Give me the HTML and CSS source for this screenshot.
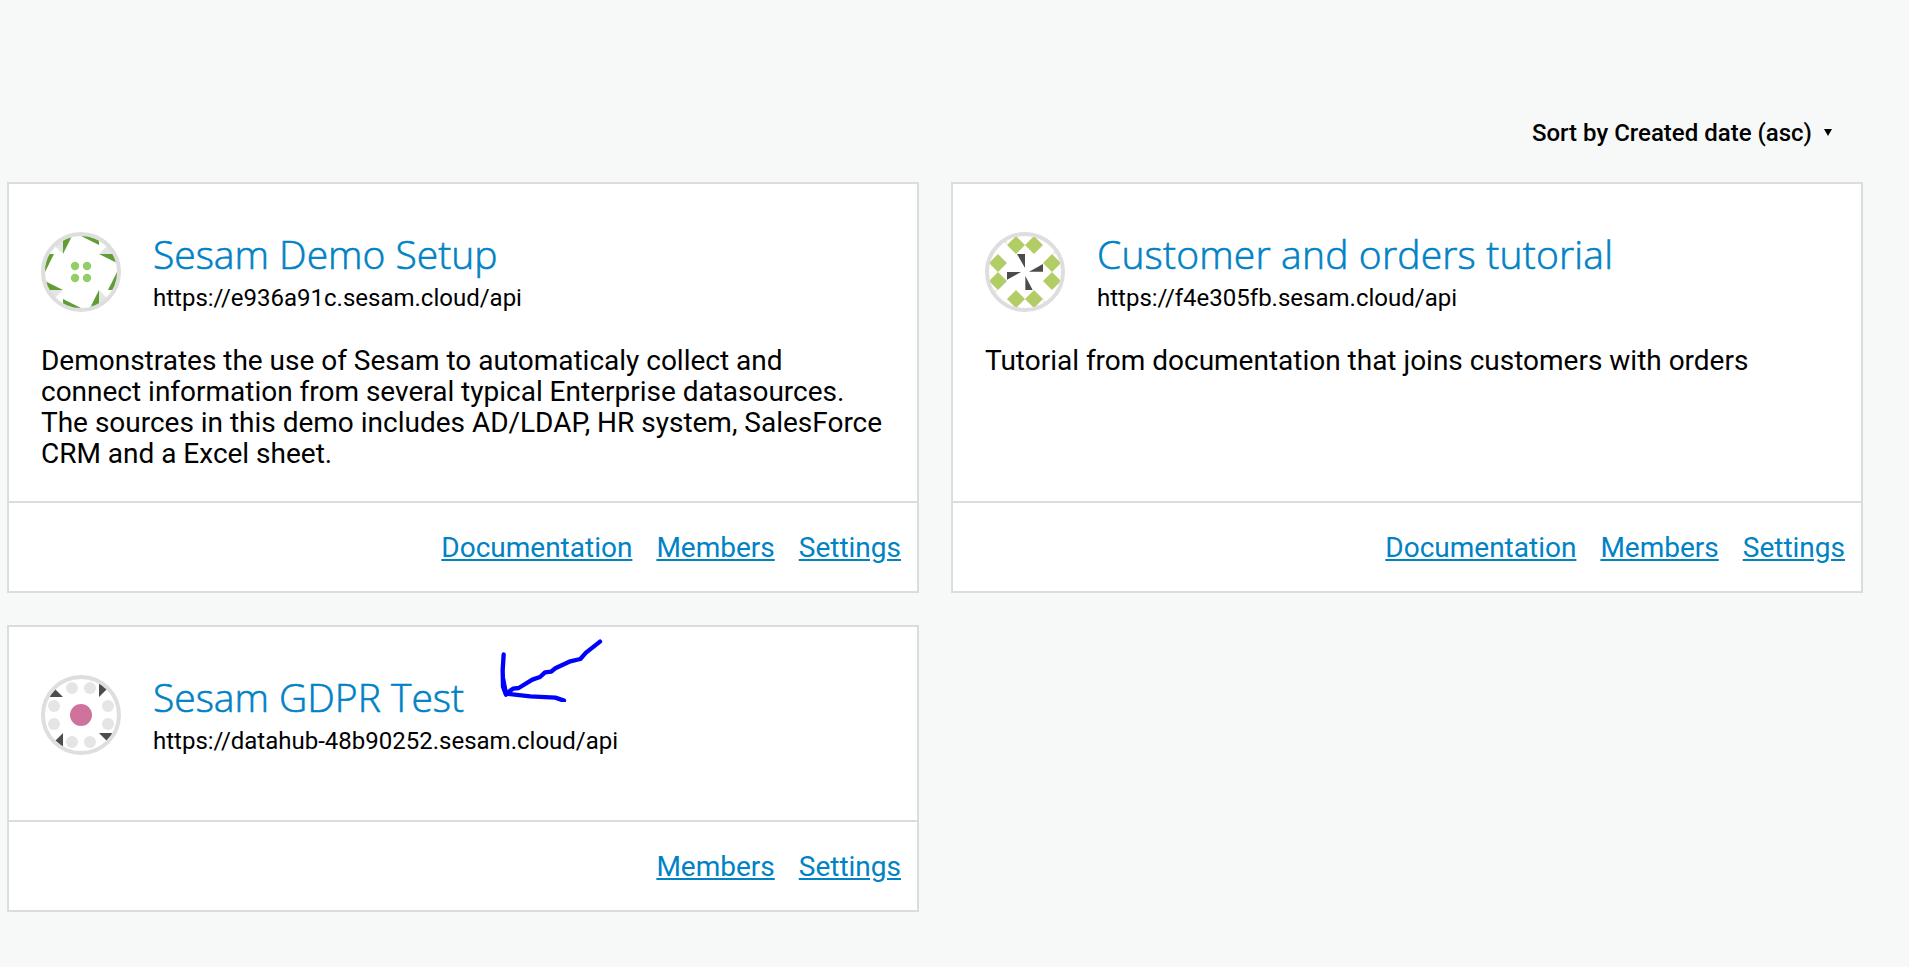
FILE: index.html
```html
<!DOCTYPE html>
<html lang="en">
<head>
<meta charset="utf-8">
<title>Sesam subscriptions</title>
<link rel="stylesheet" href="styles.css">
</head>
<body>
<main class="page">
  <div class="toolbar"><span class="sort-label">Sort by Created date (asc)</span><svg class="caret" viewBox="0 0 8 7"><path d="M0 0h8L4 7z"/></svg></div>
  <div class="cards">
    <article class="card">
      <div class="body">
        <header class="head">
          <svg class="avatar" viewBox="33 36 240 240">
            <clipPath id="c1"><circle cx="153" cy="156" r="110"/></clipPath>
            <circle cx="153" cy="156" r="114" fill="#fff"/>
            <g clip-path="url(#c1)">
              <path fill="#e5e5e5" d="M72 75L99 48V102zM207 102H261L234 75zM207 210V264L234 237zM45 210H99L72 237z"/>
              <path fill="#609e34" d="M99 48H126L99 102zM153 48H207V75zM207 102H261V129zM261 156V210H234zM207 210V264H180zM99 237L153 264H99zM45 183L99 210H45zM45 102H72L45 156z"/>
              <g fill="#92cf68"><circle cx="135" cy="138" r="12.5"/><circle cx="171" cy="138" r="12.5"/><circle cx="135" cy="174" r="12.5"/><circle cx="171" cy="174" r="12.5"/></g>
            </g>
            <circle class="ring" cx="153" cy="156" r="114"/>
          </svg>
          <div class="heading"><h2 class="title title-demo">Sesam Demo Setup</h2><p class="url">https://e936a91c.sesam.cloud/api</p></div>
        </header>
        <p class="desc">Demonstrates the use of Sesam to automaticaly collect and connect information from several typical Enterprise datasources. The sources in this demo includes AD/LDAP, HR system, SalesForce CRM and a Excel sheet.</p>
      </div>
      <footer class="links"><a href="#">Documentation</a><a href="#">Members</a><a href="#">Settings</a></footer>
    </article>
    <article class="card">
      <div class="body">
        <header class="head">
          <svg class="avatar" viewBox="30 36 240 240">
            <clipPath id="c2"><circle cx="150" cy="156" r="110"/></clipPath>
            <g clip-path="url(#c2)">
              <path fill="#ececec" d="M69 48H96V75zM258 75V102H231zM231 264H204V237zM42 237V210H69z"/>
              <path fill="#b2cd66" d="M123 48l27 27-27 27-27-27zM177 48l27 27-27 27-27-27zM231 102l27 27-27 27-27-27zM231 156l27 27-27 27-27-27zM177 210l27 27-27 27-27-27zM123 210l27 27-27 27-27-27zM69 156l27 27-27 27-27-27zM69 102l27 27-27 27-27-27z"/>
              <path fill="#4c4c4c" d="M126 102H150V144zM162 155L204 132V155zM151 168L173 210H151zM96 156H138L96 179z"/>
            </g>
            <circle class="ring" cx="150" cy="156" r="114"/>
          </svg>
          <div class="heading"><h2 class="title title-tutorial">Customer and orders tutorial</h2><p class="url">https://f4e305fb.sesam.cloud/api</p></div>
        </header>
        <p class="desc">Tutorial from documentation that joins customers with orders</p>
      </div>
      <footer class="links"><a href="#">Documentation</a><a href="#">Members</a><a href="#">Settings</a></footer>
    </article>
    <article class="card">
      <div class="body">
        <header class="head">
          <svg class="avatar" viewBox="33 30 240 240">
            <clipPath id="c3"><circle cx="153" cy="150" r="110"/></clipPath>
            <g clip-path="url(#c3)">
              <g fill="#e5e5e5"><circle cx="126" cy="69" r="18"/><circle cx="180" cy="69" r="18"/><circle cx="234" cy="123" r="18"/><circle cx="234" cy="177" r="18"/><circle cx="180" cy="231" r="18"/><circle cx="126" cy="231" r="18"/><circle cx="72" cy="177" r="18"/><circle cx="72" cy="123" r="18"/></g>
              <path fill="#4c4c4c" d="M45 96H99L72 69zM207 42V96L234 69zM207 204H261L234 231zM99 204V258L72 231z"/>
              <circle cx="153" cy="150" r="33" fill="#d0739c"/>
            </g>
            <circle class="ring" cx="153" cy="150" r="114"/>
          </svg>
          <div class="heading"><h2 class="title title-gdpr">Sesam GDPR Test</h2><p class="url">https://datahub-48b90252.sesam.cloud/api</p></div>
        </header>
        <p class="desc"></p>
      </div>
      <footer class="links"><a href="#">Members</a><a href="#">Settings</a></footer>
      <svg class="arrow" viewBox="1100 45 330 200">
        <path stroke-width="13" d="M1409 65L1367 98L1350 117L1320 124L1275 145L1262 155L1244 157L1229 171L1206 179L1165 204L1148 206L1127 221L1200 229L1275 233L1301 242"/>
        <path stroke-width="13" d="M1120 103L1117 150L1118 200L1127 224"/>
        <path stroke-width="11" d="M1118 170L1123 195L1128 220"/>
      </svg>
    </article>
  </div>
</main>
</body>
</html>
```

FILE: styles.css
```css
* { box-sizing: border-box; }
body {
  margin: 0;
  min-height: 967px;
  background: #f7f9f9;
  color: #000;
  font-family: Roboto, "Liberation Sans", sans-serif;
}
.page { padding: 0 46px 0 7px; }
.toolbar {
  height: 182px;
  padding: 117px 31px 0 0;
  display: flex;
  align-items: flex-start;
  justify-content: flex-end;
  gap: 12px;
  font-size: 24px;
  font-weight: 500;
  line-height: 32px;
}
.caret { width: 8px; height: 7px; margin-top: 12px; }
.cards {
  display: grid;
  grid-template-columns: 912px 912px;
  gap: 32px;
  align-items: start;
}
.card {
  position: relative;
  background: #fff;
  border: 2px solid #dbdcdc;
  display: flex;
  flex-direction: column;
}
.card:nth-child(-n+2) { height: 411px; }
.card:nth-child(3) { height: 287px; }
.body { flex: 1; padding: 48px 32px 0; }
.head { display: flex; gap: 32px; height: 80px; }
.avatar { width: 80px; height: 80px; flex: none; }
.ring { fill: none; stroke: #dedede; stroke-width: 12; }
.title {
  margin: 0;
  color: #0082c5;
  font-family: "Open Sans", "Noto Sans", sans-serif;
  font-size: 39px;
  font-weight: 300;
  line-height: 44px;
  white-space: nowrap;
  -webkit-text-stroke: 0.6px #0082c5;
}
.title-tutorial { letter-spacing: 0.18px; }
.url { margin: 8px 0 0; font-size: 24px; line-height: 28px; white-space: nowrap; }
.desc { margin: 33px 0 0; font-size: 28px; line-height: 31px; letter-spacing: -0.01px; }
.links {
  height: 90px;
  padding: 0 16px;
  border-top: 2px solid #dbdcdc;
  display: flex;
  align-items: center;
  justify-content: flex-end;
  gap: 24px;
  font-size: 28px;
}
.links a { color: #0082c5; text-decoration: underline; }
.arrow {
  position: absolute;
  left: 487.67px;
  top: 8px;
  width: 110px;
  height: 66.67px;
  fill: none;
  stroke: #0000fe;
  stroke-linecap: round;
  stroke-linejoin: round;
}
```
